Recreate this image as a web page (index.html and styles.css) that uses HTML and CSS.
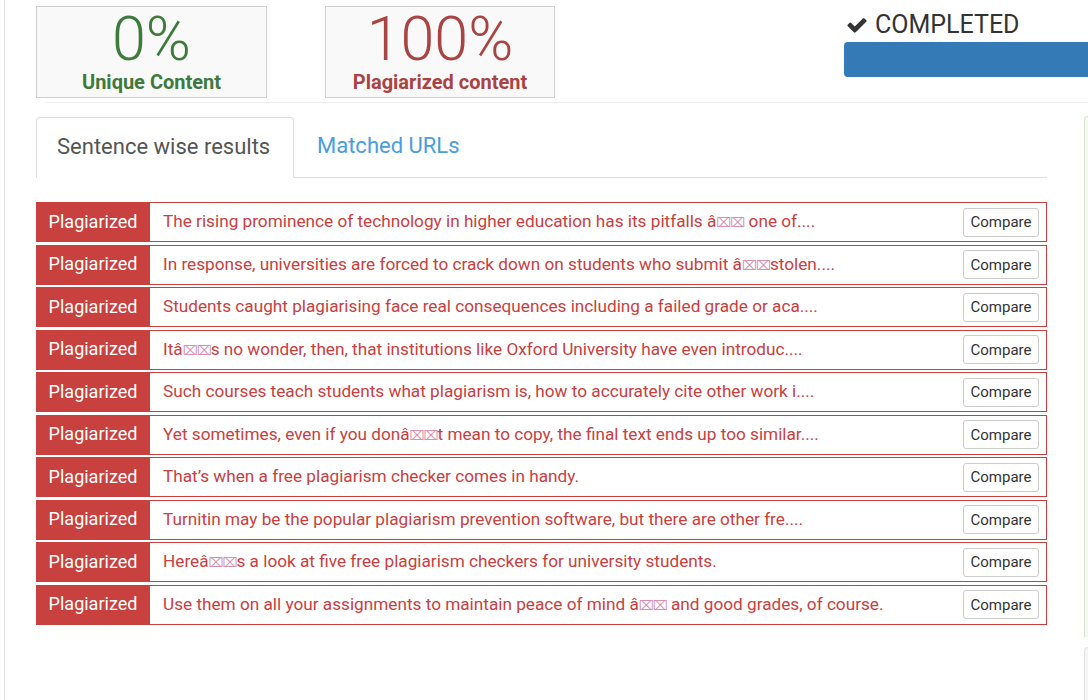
FILE: index.html
```html
<!DOCTYPE html>
<html>
<head>
<meta charset="utf-8">
<link rel="stylesheet" href="styles.css">
</head>
<body>
<div class="page">
  <div class="main">
    <div class="top">
      <div class="stat stat-unique">
        <div class="stat-num">0%</div>
        <div class="stat-label">Unique Content</div>
      </div>
      <div class="stat stat-plag">
        <div class="stat-num">100%</div>
        <div class="stat-label">Plagiarized content</div>
      </div>
      <div class="status">
        <div class="status-text">
          <svg class="check" viewBox="0 0 1792 1792" width="22" height="22"><path d="M1671 566q0 40-28 68l-724 724-136 136q-28 28-68 28t-68-28l-136-136-362-362q-28-28-28-68t28-68l136-136q28-28 68-28t68 28l294 295 656-657q28-28 68-28t68 28l136 136q28 28 28 68z" fill="#333"/></svg>
          <span>COMPLETED</span>
        </div>
        <div class="progress"></div>
      </div>
    </div>
    <div class="rule"></div>
    <div class="tabs">
      <div class="tab tab-active">Sentence wise results</div>
      <div class="tab tab-link">Matched URLs</div>
    </div>
    <div class="rows">
      <div class="row"><div class="badge">Plagiarized</div><div class="sentence">The rising prominence of technology in higher education has its pitfalls â<span class="bx">⌧⌧</span> one of....</div><button class="compare">Compare</button></div>
      <div class="row"><div class="badge">Plagiarized</div><div class="sentence">In response, universities are forced to crack down on students who submit â<span class="bx">⌧⌧</span>stolen....</div><button class="compare">Compare</button></div>
      <div class="row"><div class="badge">Plagiarized</div><div class="sentence">Students caught plagiarising face real consequences including a failed grade or aca....</div><button class="compare">Compare</button></div>
      <div class="row"><div class="badge">Plagiarized</div><div class="sentence">Itâ<span class="bx">⌧⌧</span>s no wonder, then, that institutions like Oxford University have even introduc....</div><button class="compare">Compare</button></div>
      <div class="row"><div class="badge">Plagiarized</div><div class="sentence">Such courses teach students what plagiarism is, how to accurately cite other work i....</div><button class="compare">Compare</button></div>
      <div class="row"><div class="badge">Plagiarized</div><div class="sentence">Yet sometimes, even if you donâ<span class="bx">⌧⌧</span>t mean to copy, the final text ends up too similar....</div><button class="compare">Compare</button></div>
      <div class="row"><div class="badge">Plagiarized</div><div class="sentence">That’s when a free plagiarism checker comes in handy.</div><button class="compare">Compare</button></div>
      <div class="row"><div class="badge">Plagiarized</div><div class="sentence">Turnitin may be the popular plagiarism prevention software, but there are other fre....</div><button class="compare">Compare</button></div>
      <div class="row"><div class="badge">Plagiarized</div><div class="sentence">Hereâ<span class="bx">⌧⌧</span>s a look at five free plagiarism checkers for university students.</div><button class="compare">Compare</button></div>
      <div class="row"><div class="badge">Plagiarized</div><div class="sentence">Use them on all your assignments to maintain peace of mind â<span class="bx">⌧⌧</span> and good grades, of course.</div><button class="compare">Compare</button></div>
    </div>
  </div>
  <div class="side">
    <div class="panel panel-green"></div>
    <div class="panel panel-gray"></div>
  </div>
</div>
</body>
</html>
```

FILE: styles.css
```css
html, body {
  margin: 0;
  padding: 0;
  background: #fff;
}
body {
  font-family: Roboto, "Liberation Sans", Arial, sans-serif;
  color: #333;
}
.page {
  width: 1088px;
  height: 700px;
  overflow: hidden;
  display: flex;
}
.main {
  margin-left: 4px;
  flex: 0 0 1080px;
  width: 1080px;
  min-width: 0;
  box-sizing: border-box;
  border-left: 1px solid #e7e7e7;
  padding: 6px 37px 0 31px;
}
.top {
  display: flex;
  align-items: flex-start;
  height: 92px;
}
.stat {
  flex: 0 0 231px;
  height: 92px;
  box-sizing: border-box;
  border: 1px solid #cfcfcf;
  background: #f9f9f9;
  text-align: center;
}
.stat-plag {
  margin-left: 58px;
  flex-basis: 230px;
}
.stat-num {
  font-size: 61px;
  font-weight: 300;
  line-height: 58px;
  margin-top: 3px;
}
.stat-label {
  font-size: 20px;
  font-weight: 700;
  line-height: 24px;
  margin-top: 2px;
}
.stat-unique { color: #3d7b3d; }
.stat-plag { color: #a94442; }
.status {
  margin-left: 289px;
  flex: 0 0 300px;
}
.status-text {
  display: flex;
  align-items: center;
  height: 30px;
  margin-top: 4px;
  padding-left: 2px;
  font-size: 25px;
  color: #333;
  line-height: 30px;
}
.check {
  margin-right: 7px;
}
.progress {
  margin-top: 2px;
  height: 35px;
  border-radius: 4px;
  background: #337ab7;
}
.rule {
  height: 1px;
  background: #eeeeee;
  margin: 4px -80px 0 10px;
}
.tabs {
  margin-top: 14px;
  display: flex;
  height: 60px;
  border-bottom: 1px solid #dddddd;
}
.tab {
  font-size: 22px;
  line-height: 58px;
  padding: 0 20px;
}
.tab-active {
  width: 258px;
  box-sizing: border-box;
  border: 1px solid #dddddd;
  border-bottom: 1px solid #fff;
  border-radius: 4px 4px 0 0;
  color: #555;
  background: #fff;
  height: 61px;
  padding: 0 0 0 20px;
}
.tab-link {
  color: #4a9de0;
  padding-left: 23px;
}
.rows {
  margin-top: 24px;
  display: flex;
  flex-direction: column;
  gap: 2.5px;
}
.row {
  display: flex;
  align-items: center;
  height: 40px;
  box-sizing: border-box;
  border: 1px solid #cc3e3c;
}
.badge {
  align-self: stretch;
  flex: 0 0 114px;
  margin: -1px 0 -1px -1px;
  background: #c9413f;
  color: #fff;
  font-size: 18px;
  display: flex;
  align-items: center;
  justify-content: center;
  padding-bottom: 2px;
  box-sizing: border-box;
}
.sentence {
  flex: 1;
  min-width: 0;
  padding-left: 13px;
  padding-bottom: 2px;
  font-size: 17.2px;
  color: #c9403e;
  white-space: nowrap;
  overflow: hidden;
}
.bx {
  color: #d88fb0;
  font-family: "DejaVu Sans", sans-serif;
  font-size: 13px;
  letter-spacing: -1px;
}
.compare {
  flex: 0 0 76px;
  margin-right: 7px;
  height: 29px;
  box-sizing: border-box;
  border: 1px solid #cccccc;
  border-radius: 3px;
  background: #fff;
  color: #333;
  font-family: Roboto, "Liberation Sans", Arial, sans-serif;
  font-size: 15px;
  padding: 0;
}
.side {
  flex: 0 0 40px;
  padding-top: 116px;
}
.panel {
  border-radius: 4px 0 0 0;
  background: #f7f7f7;
}
.panel-green {
  height: 520px;
  border-left: 1px solid #d6e9c6;
  border-top: 1px solid #d6e9c6;
}
.panel-gray {
  margin-top: 10px;
  height: 60px;
  border-left: 1px solid #e3e3e3;
  border-top: 1px solid #e3e3e3;
  background: #f5f5f5;
}
```
